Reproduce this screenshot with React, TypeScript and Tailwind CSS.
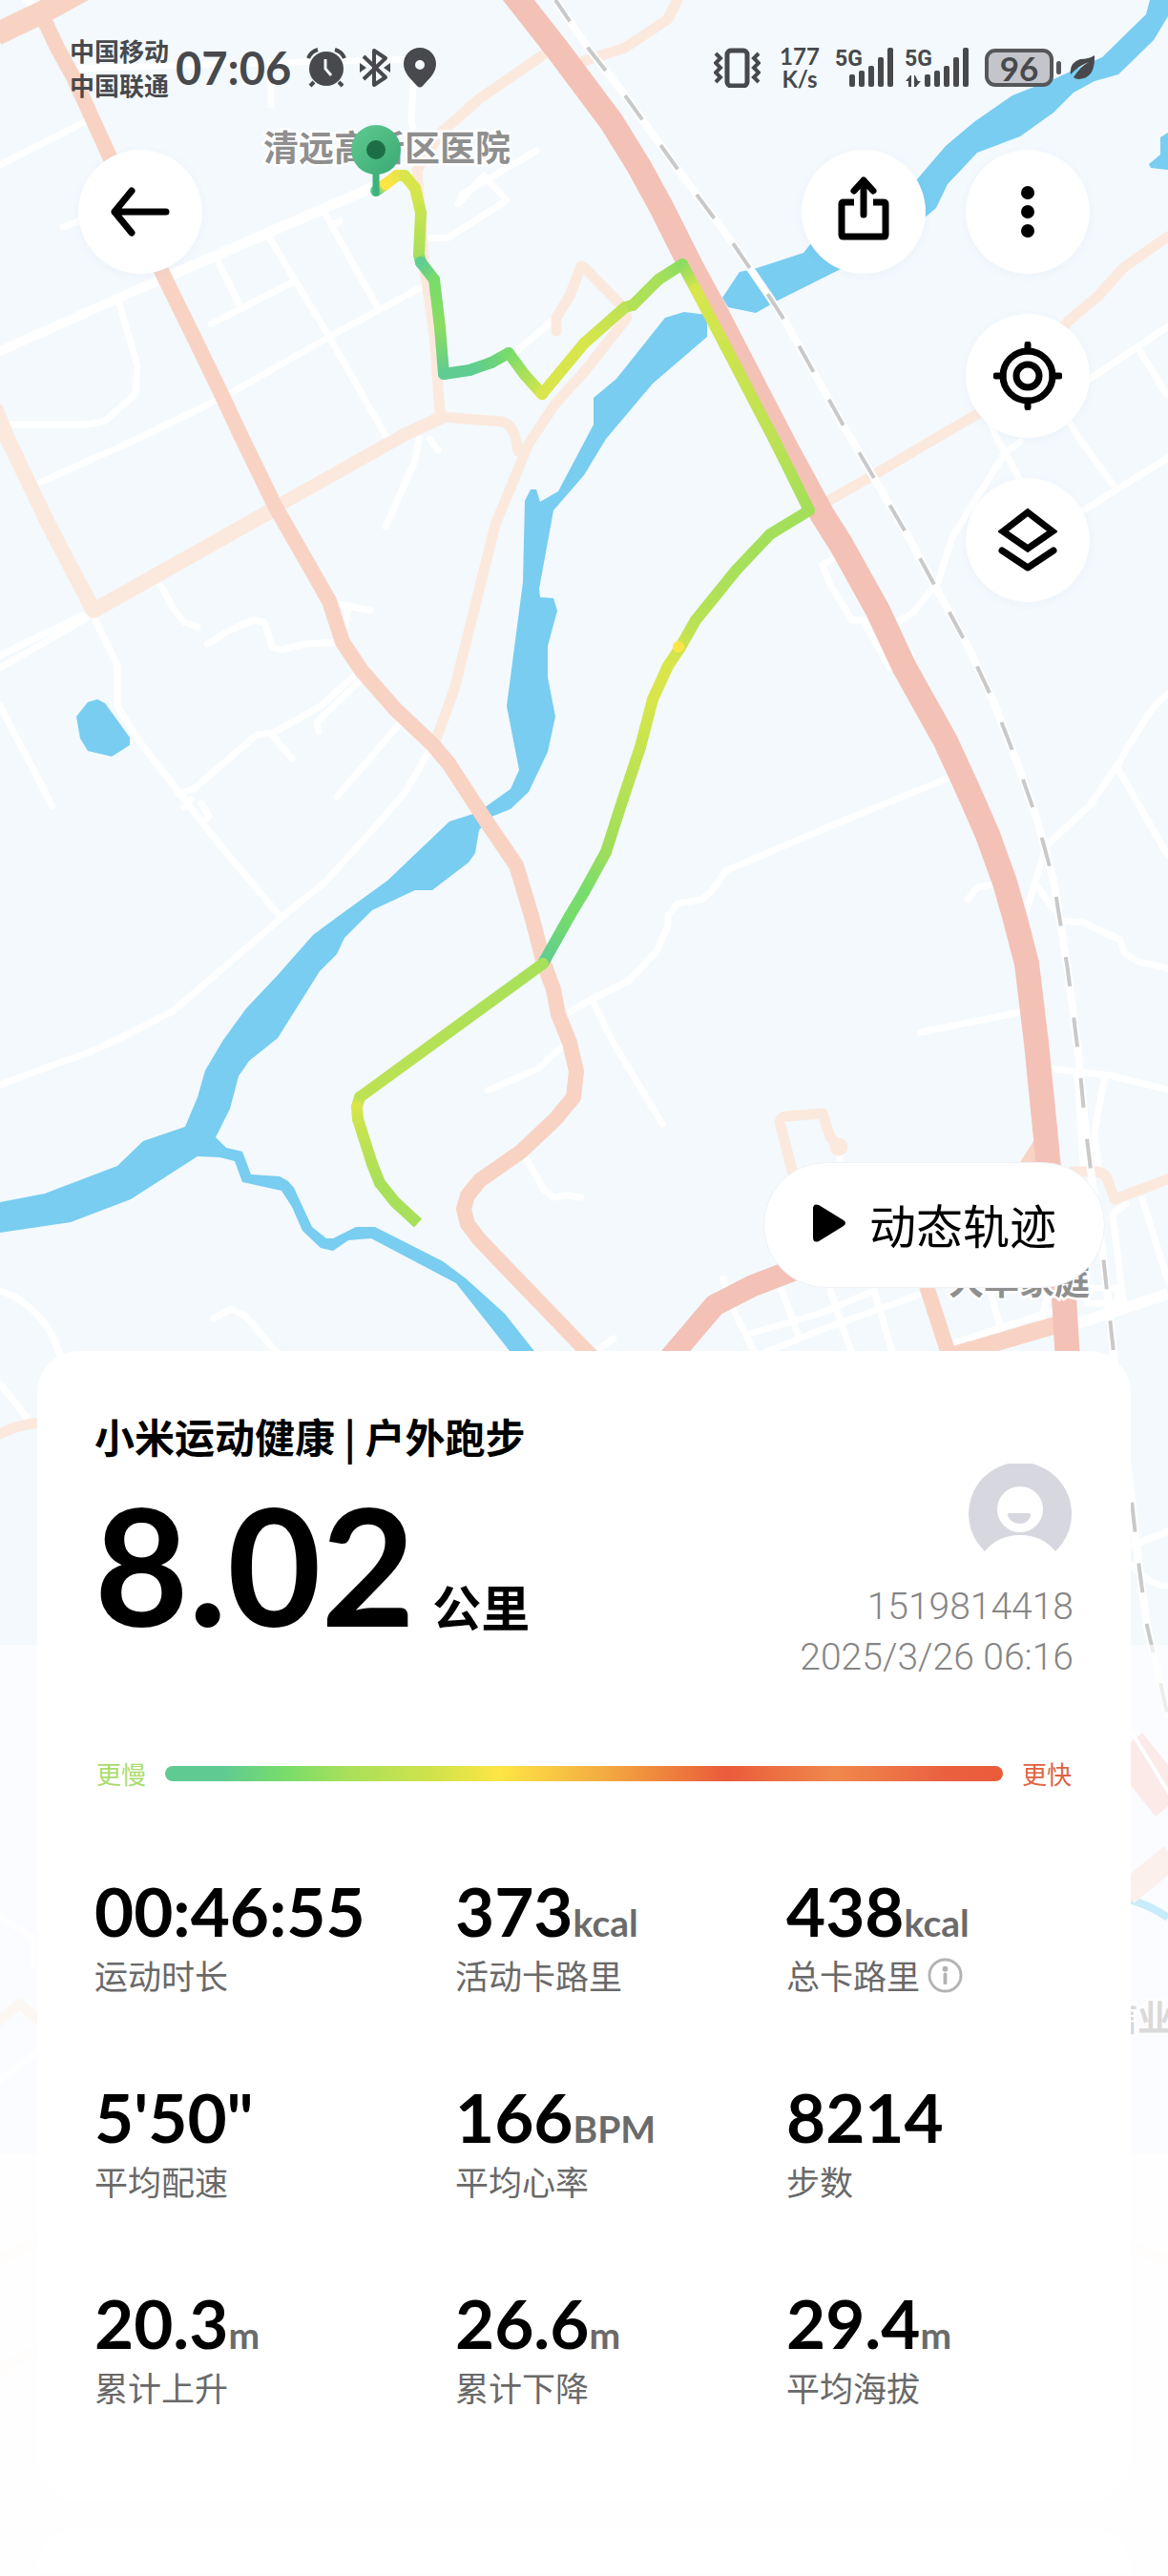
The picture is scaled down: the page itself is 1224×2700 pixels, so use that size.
import React from "react";

const WHITE_ROADS = [
  "M0 173L88 128",
  "M80 72L195 68L441 62",
  "M284 67V110",
  "M433 87L431 127L437 150",
  "M66 238L86 230",
  "M125 318L144 383L142 413L109 442L90 445H8",
  "M228 273L252 322",
  "M281 247L345 353L406 460",
  "M221 340L308 295",
  "M340 223L396 323",
  "M348 236L356 232",
  "M240 413L345 353L443 300",
  "M39 507L144 460L226 420",
  "M449 250L470 249L531 210L507 184L480 214L484 204L562 158",
  "M578 337L539 370",
  "M1224 342L1135 402L1090 450",
  "M1194 367L1222 413",
  "M1036 440L1045 460L1069 503",
  "M1069 463L1053 475L998 563L983 610L956 643L940 652",
  "M930 642L956 690",
  "M1110 425L1131 460L1168 510",
  "M1224 480L1135 535",
  "M874 585L862 592L870 613L893 650H905L932 700",
  "M995 815L877 863L760 913L745 935L735 943L710 947L700 960V970L688 997L659 1028L620 1047L593 1063",
  "M620 1047L641 1090L694 1178",
  "M1041 927L1024 930L1014 943",
  "M1224 727Q1206 742 1198 757L1170 803L1143 843L1096 887L1084 927L1075 957",
  "M1170 803L1224 897",
  "M1086 927L1104 953",
  "M1112 965L1135 967L1174 985L1178 998L1190 1007L1224 1015",
  "M965 1082L1034 1068L1073 1060",
  "M1100 1120L1162 1127L1224 1142",
  "M1158 1127L1147 1187L1151 1223",
  "M1129 1127L1135 1220",
  "M758 1340L762 1356",
  "M768 1372L792 1420",
  "M819 1352L838 1403",
  "M870 1353L893 1420",
  "M916 1353L936 1420",
  "M788 1397L858 1377L916 1353",
  "M803 1417L860 1394L963 1357",
  "M1002 1407L1106 1373",
  "M1037 1350L1051 1402",
  "M1098 1353L1091 1390",
  "M1197 1257L1224 1343",
  "M1180 1262L1166 1272L1178 1373",
  "M1139 1350H1172V1366H1139Z",
  "M628 1413L643 1403",
  "M879 1207L881 1220",
  "M0 687L86 645",
  "M0 700L70 660L90 648",
  "M100 650L123 697V740L146 777L195 840L234 890L293 960",
  "M0 740L55 845",
  "M168 613L183 640L193 652L207 657",
  "M217 675L242 660L265 650L277 652L285 678L295 681L320 675L353 673",
  "M349 632L388 640M365 637L361 657",
  "M375 705L336 740L287 768L269 770L203 827L187 832",
  "M379 712L332 757L334 767",
  "M285 770L306 795",
  "M420 757L353 835",
  "M449 788L425 830L384 877L340 925L297 960L181 1060L130 1086L94 1103L59 1115L0 1137",
  "M439 460L435 483L404 552M450 460L459 472",
  "M211 842L219 855L213 862M193 846L200 838",
  "M591 1095L564 1120L511 1143",
  "M548 1208L570 1247L580 1255L593 1253L609 1255",
  "M0 1353Q30 1362 51 1393Q60 1410 66 1430",
  "M224 1382L242 1372L258 1380L292 1420",
  "M0 1450L29 1487",
  "M1224 1605L1186 1620",
  "M1186 1640Q1204 1662 1224 1662",
  "M0 2010L34 2030V2060",
  "M0 2180L40 2150",
];

const LIGHT_ROADS = [
  "M570 57L503 103L461 140L437 178L445 283L455 350L461 433",
  "M464 437L527 442Q540 446 543 473",
  "M612 280L651 320L657 333L612 390L582 423L554 465L519 550L476 723L455 780",
  "M609 279L597 310L583 333V347",
  "M710 0L700 20L655 50L612 64",
  "M1224 248L1178 280L1151 310L1119 337L1085 388L1026 433L971 465L912 500L868 525",
  "M831 1230L817 1176Q818 1170 825 1170L862 1167L870 1192L879 1202",
  "M1124 1228H1150Q1160 1230 1162 1240L1168 1257L1224 1236",
  "M0 1503Q16 1494 42 1491",
  "M0 2118L20 2100L42 2118",
  "M0 2368L42 2346",
  "M0 2484L42 2462",
  "M1185 2355Q1206 2362 1224 2370",
];

const RIVER =
  "M741 330L717 327L697 333L646 397L622 417V445L585 515L566 526L562 513H556L550 525L548 610L531 740L544 807L535 827L507 847L496 853L471 861L406 923L355 960L328 980L291 1022L258 1057L234 1090L215 1122L207 1150L194 1181L150 1196L123 1222L47 1251L0 1260V1292L74 1281L137 1257L207 1212L230 1213L246 1217L254 1239L295 1248L306 1265L317 1290L336 1308L349 1311L365 1300L389 1298L478 1345L545 1430H570L559 1415L529 1377L488 1340L464 1322L393 1286H373L349 1298H342L327 1286L308 1245L302 1238L293 1233L263 1231L254 1207L237 1203L226 1192L241 1162L250 1128L261 1112L291 1088L335 1018L353 1000L361 983L390 954L435 933H453L491 904L498 894L502 870L515 856L535 848L554 830L574 788L582 751L574 710V677L584 640L580 627L566 626L565 617L580 535L612 498L635 460L684 402L741 353Z";

const RIVER_EAST =
  "M1205 0L1201 15L1155 60L1104 83L1061 100L1022 127L991 153L961 188L850 255L842 265L790 282L775 285L757 312L763 322L792 328L813 316L881 282L963 233L981 218L993 193L1024 160L1069 143L1104 118L1125 97L1147 85L1172 78L1209 42L1224 17V0Z";

const RAIL =
  "M582 0L616 50L655 100L710 177L768 255L807 312L823 337L885 448L952 563L983 620L1014 677L1041 735L1065 797L1086 857L1104 923L1110 960L1119 1017L1131 1113L1137 1177L1145 1242L1155 1307L1168 1427L1185 1564L1192 1629L1202 1704L1217 1768L1224 1800";

type Stop = [number, number, string];

const G = "#5fcd91";
const M = "#77dc6b";
const L = "#a8e05a";
const Y = "#d8e64b";
const S = "#ffe545";

const TRACK: Stop[] = [
  [394, 200, G],
  [404, 193, S],
  [416, 184, "#ece547"],
  [424, 184, Y],
  [435, 197, Y],
  [441, 223, "#c6e450"],
  [439, 267, L],
  [441, 275, G],
  [455, 293, M],
  [461, 343, "#8bdc60"],
  [465, 392, G],
  [492, 388, G],
  [515, 380, "#69d27f"],
  [533, 370, M],
  [550, 393, L],
  [568, 413, Y],
  [612, 360, Y],
  [655, 322, "#bde253"],
  [663, 320, "#b2e156"],
  [690, 293, L],
  [715, 277, "#8bdc60"],
  [729, 303, Y],
  [811, 460, "#bde253"],
  [848, 535, "#a3df5b"],
  [807, 560, "#a3df5b"],
  [772, 597, L],
  [729, 650, "#b8e255"],
  [712, 680, "#cde44e"],
  [700, 698, Y],
  [684, 733, Y],
  [671, 783, "#c6e450"],
  [653, 837, "#b2e156"],
  [635, 893, "#9fde5c"],
  [612, 935, M],
  [597, 960, M],
  [570, 1008, G],
  [569, 1010, L],
  [377, 1150, "#bde253"],
  [374, 1160, Y],
  [375, 1173, "#cde44e"],
  [390, 1220, "#b2e156"],
  [398, 1240, L],
  [414, 1260, L],
  [438, 1282, L],
];

function Track() {
  const segments = TRACK.slice(1).map((end, i) => ({ start: TRACK[i], end, id: `track-${i}` }));
  return (
    <g strokeWidth="12" fill="none">
      <defs>
        {segments.map(({ start, end, id }) => (
          <linearGradient key={id} id={id} gradientUnits="userSpaceOnUse" x1={start[0]} y1={start[1]} x2={end[0]} y2={end[1]}>
            <stop offset="0" stopColor={start[2]} />
            <stop offset="1" stopColor={end[2]} />
          </linearGradient>
        ))}
      </defs>
      {segments.map(({ start, end, id }, i) => (
        <path
          key={id}
          d={`M${start[0]} ${start[1]}L${end[0]} ${end[1]}`}
          stroke={`url(#${id})`}
          strokeLinecap={i === segments.length - 1 ? "butt" : "round"}
        />
      ))}
      <circle cx="711" cy="678" r="6" fill="#ffe545" />
    </g>
  );
}

function RouteMap() {
  const label = "fill-[#8f8f8f] font-bold text-[37px]";
  return (
    <svg className="absolute left-0 top-0 h-auto w-full" viewBox="0 0 1224 2700" role="img" aria-label="跑步轨迹地图">
      <defs>
        <linearGradient id="pin" x1="0" y1="0" x2="1" y2="1">
          <stop offset="0" stopColor="#5fcb92" />
          <stop offset="1" stopColor="#3aa873" />
        </linearGradient>
      </defs>
      <rect width="1224" height="2700" fill="#f3f9fd" />
      <g fill="#78cdf1">
        <path d={RIVER} />
        <path d={RIVER_EAST} />
        <path d="M1224 139L1216 144V162L1204 172L1206 176L1224 178Z" />
        <path d="M80 751L92 736L102 733L110 737L136 773V781L117 793L92 787L84 774Z" />
        <path d="M1180 1990Q1204 1996 1224 2010" fill="none" stroke="#5cc6f0" strokeWidth="8" />
      </g>
      <g fill="none" stroke="#ffffff" strokeWidth="7" strokeLinecap="round" strokeLinejoin="round">
        {WHITE_ROADS.map((d) => (
          <path key={d} d={d} />
        ))}
        <path d="M0 368L168 293" strokeWidth="10" />
        <path d="M180 288L398 193" strokeWidth="11" strokeLinecap="butt" />
        <path d="M1127 1388L1224 1356" strokeWidth="12" strokeLinecap="butt" />
        <path d="M28 0L34 5" strokeWidth="8" />
      </g>
      <g fill="none" stroke="#fce9de" strokeWidth="11" strokeLinecap="round" strokeLinejoin="round">
        {LIGHT_ROADS.map((d) => (
          <path key={d} d={d} />
        ))}
        <path d="M-4 430L8 460L51 550L98 640L281 537" strokeWidth="16" />
        <path d="M295 528L425 455L464 437" strokeWidth="14" />
        <circle cx="879" cy="1202" r="4" />
      </g>
      <g fill="none" stroke="#f8d3c4" strokeWidth="16" strokeLinejoin="round">
        <path d="M-4 36L46 12L90 -12" strokeWidth="24" />
        <path d="M44 16L60 50L78 83L113 160L172 290L203 353L232 413L254 460L289 532L324 593L345 630L359 673L379 703L414 743L453 780L470 800L507 857L541 907L557 960L570 1010L580 1037L585 1063L597 1093L604 1123L601 1150L582 1173L546 1207L503 1237L490 1253L486 1267L490 1283L503 1300L630 1432" />
        <path d="M971 1348L996 1425" />
        <path d="M1000 1420L1106 1389" strokeWidth="18" />
        <path d="M1090 1200L1076 1222" />
        <path d="M1180 1985L1228 1945" strokeWidth="26" />
      </g>
      <path d={RAIL} fill="none" stroke="#ffffff" strokeWidth="8" />
      <path d={RAIL} fill="none" stroke="#c9c9c9" strokeWidth="4" strokeDasharray="31 33" strokeDashoffset="4" />
      <g fill="none" stroke="#f4c1b7" strokeWidth="26" strokeLinejoin="round">
        <path d="M534 -12L585 53L641 128L670 175L694 219L725 281L750 327L825 472L862 540L881 570L920 640L948 700L991 777L1014 827L1035 875L1053 925L1063 960L1076 1010L1086 1093L1096 1193L1104 1280L1115 1360L1119 1427" />
        <path d="M698 1428L749 1368L788 1348L845 1326" strokeWidth="23" />
        <path d="M1180 1830L1228 1890" strokeWidth="44" />
      </g>
      <path d="M1180 1806L1228 1884" stroke="#ffffff" strokeWidth="4" />
      <g className={label} style={{ fontFamily: '"Noto Sans CJK SC", sans-serif' }} stroke="#ffffff" strokeWidth="5" paintOrder="stroke">
        <text x="276" y="169">清远高新区医院</text>
        <text x="994" y="1357">大华家庭</text>
        <text x="1155" y="2129">信业</text>
      </g>
      <Track />
      <path d="M394 180V202" stroke="#3cb37c" strokeWidth="7" strokeLinecap="round" />
      <circle cx="394" cy="157" r="26" fill="url(#pin)" />
      <circle cx="394" cy="157" r="10" fill="#1d6e47" />
      <rect y="1724" width="1224" height="533" fill="#fdfdff" fillOpacity="0.68" />
      <rect y="2257" width="1224" height="443" fill="#fefefe" fillOpacity="0.93" />
    </svg>
  );
}

function Signal({ data = false }: { data?: boolean }) {
  const bars = [28, 24, 19, 10, 0];
  return (
    <svg className="overflow-visible" width={data ? 67 : 62} height="42" viewBox={data ? "-5 0 67 42" : "0 0 62 42"} fill="currentColor" aria-label="5G">
      {bars.map((top, i) => (
        <rect key={top} x={15 + i * 10} y={top} width="6" height={41 - top} rx="2" />
      ))}
      <text x={data ? -6 : 0} y="19" className="text-[23px] font-bold" style={{ fontFamily: "Roboto, sans-serif" }}>
        5G
      </text>
      {data && <path d="M0 29L-5 35H-2V41H1V29ZM4 29V41H6L11 35H8L5 29Z" />}
    </svg>
  );
}

function StatusBar() {
  return (
    <header className="flex h-[46px] items-center justify-between pl-[73px] pr-[76px] text-[#47494c]">
      <div className="flex items-center">
        <div className="text-[26px] font-bold leading-[36px]">
          <p>中国移动</p>
          <p>中国联通</p>
        </div>
        <time className="ml-[7px] w-[137px] font-[Lato] text-[47px] font-bold leading-none">07:06</time>
        <svg width="42" height="42" viewBox="0 0 42 42" aria-label="闹钟">
          <circle cx="21" cy="22" r="18" fill="currentColor" />
          <path d="M2 11Q5 4 12 2M40 11Q37 4 30 2M8 36L4 40M34 36L38 40" stroke="currentColor" strokeWidth="4" fill="none" />
          <path d="M20 12V22L26 29" stroke="#f3f9fd" strokeWidth="3" fill="none" />
        </svg>
        <svg className="ml-[14px]" width="32" height="42" viewBox="0 0 32 42" fill="none" stroke="currentColor" strokeWidth="4" strokeLinejoin="round" aria-label="蓝牙">
          <path d="M4 9L27 31L15 39V3L27 11L4 33" />
          <path d="M0 16L7 21L0 26ZM32 16L25 21L32 26Z" fill="currentColor" stroke="none" />
        </svg>
        <svg className="ml-[13px]" width="36" height="42" viewBox="0 0 36 42" fill="currentColor" aria-label="定位">
          <path fillRule="evenodd" d="M18 0C8 0 1 8 1 17C1 27 9 33 15 40Q18 43 21 40C27 33 35 27 35 17C35 8 28 0 18 0ZM18 13A5 5 0 1 1 18 23A5 5 0 1 1 18 13Z" />
        </svg>
      </div>
      <div className="flex items-center">
        <svg width="49" height="42" viewBox="0 0 49 42" fill="none" stroke="currentColor" strokeWidth="4" aria-label="振动">
          <rect x="14" y="3" width="21" height="37" rx="4" strokeWidth="5" />
          <path d="M2 6L7 11L2 16L7 21L2 26L7 31L2 36M47 6L42 11L47 16L42 21L47 26L42 31L47 36" />
        </svg>
        <div className="ml-[18px] w-[46px] text-center font-[Lato] text-[24px] font-bold leading-[24px]">
          <p>177</p>
          <p>K/s</p>
        </div>
        <div className="ml-[14px] flex gap-[12px]">
          <Signal />
          <Signal data />
        </div>
        <div className="ml-[16px] flex h-[40px] w-[72px] items-center justify-center rounded-[11px] border-4 border-[#55575a] bg-[#c3c5ca] font-[Lato] text-[35px] font-bold leading-none">
          96
        </div>
        <span className="ml-[3px] h-[14px] w-[5px] rounded-full bg-[#55575a]" />
        <svg className="ml-[9px]" width="27" height="26" viewBox="0 0 27 26" fill="currentColor" aria-label="省电">
          <path d="M26 0Q27 24 10 25Q6 25 4 23Q12 11 20 7Q9 11 1 20Q-1 8 11 4Q20 4 26 0Z" />
        </svg>
      </div>
    </header>
  );
}

function RoundButton({ label, children }: { label: string; children: React.ReactNode }) {
  return (
    <button type="button" aria-label={label} className="flex size-[130px] items-center justify-center rounded-full bg-white shadow-[0_2px_10px_rgba(90,120,190,0.05)]">
      {children}
    </button>
  );
}

const STATS = [
  { value: "00:46:55", unit: "", label: "运动时长" },
  { value: "373", unit: "kcal", label: "活动卡路里" },
  { value: "438", unit: "kcal", label: "总卡路里", info: true },
  { value: "5'50\"", unit: "", label: "平均配速" },
  { value: "166", unit: "BPM", label: "平均心率" },
  { value: "8214", unit: "", label: "步数" },
  { value: "20.3", unit: "m", label: "累计上升" },
  { value: "26.6", unit: "m", label: "累计下降" },
  { value: "29.4", unit: "m", label: "平均海拔" },
];

function SummaryCard() {
  return (
    <section className="mx-[39px] mt-[66px] rounded-[44px] bg-white px-[60px] pb-24 pt-[58px] text-black">
      <div className="flex justify-between">
        <div>
          <h1 className="text-[42px] font-bold leading-[62px]">小米运动健康 | 户外跑步</h1>
          <p className="mt-[18px] flex items-baseline leading-[170px]">
            <span className="font-[Lato] text-[170px] font-bold">8.02</span>
            <span className="ml-[18px] text-[51px] font-bold leading-none">公里</span>
          </p>
        </div>
        <div className="flex flex-col items-end pt-[60px] font-[Roboto] text-[39px] font-light leading-[53px] text-[#858585]">
          <svg className="mr-[2px]" width="108" height="108" viewBox="0 0 108 108" aria-label="头像">
            <path d="M17 92A54 54 0 1 1 91 92Q77 75 54 75Q31 75 17 92Z" fill="#d7d8df" />
            <circle cx="54" cy="48" r="24" fill="#ffffff" />
            <path d="M43 52H63Q66 52 65 55Q62 63 54 63Q45 63 41 55Q40 52 43 52Z" fill="#d7d8df" />
          </svg>
          <p className="mt-[16px]">1519814418</p>
          <p>2025/3/26 06:16</p>
        </div>
      </div>
      <div className="mt-[76px] flex items-center gap-[20px] pl-[2px] pr-[2px] text-[26px] leading-[38px]">
        <span className="text-[#a9dc6b]">更慢</span>
        <div className="h-4 flex-1 rounded-full bg-[linear-gradient(90deg,#5fcb92_0%,#5fcb92_7%,#77dc6b_14%,#a9e05a_22%,#d5e34a_33%,#ffe545_40%,#f3ad41_52%,#ea5b3a_67%,#f0884c_80%,#ea6140_93%,#ea5b3a_100%)]" />
        <span className="text-[#e0623f]">更快</span>
      </div>
      <dl className="mt-[82px] grid grid-cols-[378fr_347fr_301fr] gap-y-[82px]">
        {STATS.map((s) => (
          <div key={s.label} className="flex flex-col-reverse">
            <dt className="flex items-center gap-[8px] text-[35px] leading-[48px] text-[#696969]">
              {s.label}
              {s.info && (
                <button type="button" aria-label="总卡路里说明">
                  <svg width="37" height="37" viewBox="0 0 38 38" fill="none" stroke="#b3b3b3">
                    <circle cx="19" cy="19" r="17" strokeWidth="3" />
                    <path d="M19 18V27" strokeWidth="4" strokeLinecap="round" />
                    <circle cx="19" cy="12" r="3" fill="#b3b3b3" stroke="none" />
                  </svg>
                </button>
              )}
            </dt>
            <dd className="whitespace-nowrap font-[Lato] text-[71px] font-bold leading-[86px]">
              {s.value}
              {s.unit && <span className="text-[39px] leading-none text-[#6b6b6b]">{s.unit}</span>}
            </dd>
          </div>
        ))}
      </dl>
    </section>
  );
}

export default function App() {
  return (
    <div lang="zh-CN" className="relative min-h-screen overflow-hidden bg-[#fdfdfd]" style={{ fontFamily: '"Noto Sans CJK SC", sans-serif' }}>
      <RouteMap />
      <main className="relative pt-[48px]">
        <StatusBar />
        <nav className="mt-[63px] flex justify-between px-[82px]">
          <RoundButton label="返回">
            <svg width="62" height="54" viewBox="0 0 62 54" fill="none" stroke="#000" strokeWidth="7" strokeLinecap="round" strokeLinejoin="round">
              <path d="M58 27H4M22 5L4 27L22 49" />
            </svg>
          </RoundButton>
          <div className="grid grid-cols-2 gap-[42px]">
            <RoundButton label="分享">
              <svg className="mb-2" width="54" height="68" viewBox="0 0 54 68" fill="none" stroke="#000" strokeWidth="7" strokeLinejoin="round">
                <path d="M17 28H6Q4 28 4 30V62Q4 64 6 64H48Q50 64 50 62V30Q50 28 48 28H37" />
                <path d="M27 41V5M17 16L27 5L37 16" strokeLinecap="round" />
              </svg>
            </RoundButton>
            <RoundButton label="更多">
              <svg width="14" height="54" viewBox="0 0 14 54">
                <circle cx="7" cy="7" r="7" />
                <circle cx="7" cy="27" r="7" />
                <circle cx="7" cy="47" r="7" />
              </svg>
            </RoundButton>
            <div className="col-start-2">
              <RoundButton label="定位">
                <svg width="72" height="72" viewBox="0 0 72 72" fill="none" stroke="#000" strokeWidth="7">
                  <circle cx="36" cy="36" r="26" />
                  <circle cx="36" cy="36" r="12" />
                  <path d="M36 3V10M36 62V69M3 36H10M62 36H69" strokeLinecap="round" />
                </svg>
              </RoundButton>
            </div>
            <div className="col-start-2">
              <RoundButton label="图层">
                <svg width="62" height="68" viewBox="0 0 62 68" fill="none" stroke="#000" strokeWidth="7">
                  <path d="M31 5L57 25L31 43L5 25Z" />
                  <path d="M4 45L31 63L58 45" strokeLinecap="round" strokeLinejoin="round" />
                </svg>
              </RoundButton>
            </div>
          </div>
        </nav>
        <div className="mt-[587px] flex justify-end pr-[66px]">
          <button type="button" className="flex h-[132px] items-center gap-[24px] rounded-full border border-[#eef2f6] bg-white pb-[4px] pl-[50px] pr-[50px] text-[49px] leading-none text-black">
            <svg width="36" height="40" viewBox="0 0 36 40">
              <path d="M1 5Q1 -1 7 1L33 17Q37 20 33 23L7 39Q1 41 1 35Z" />
            </svg>
            动态轨迹
          </button>
        </div>
        <SummaryCard />
        <div className="mx-[39px] mt-[28px] h-12 rounded-t-[44px] bg-white" />
      </main>
    </div>
  );
}
